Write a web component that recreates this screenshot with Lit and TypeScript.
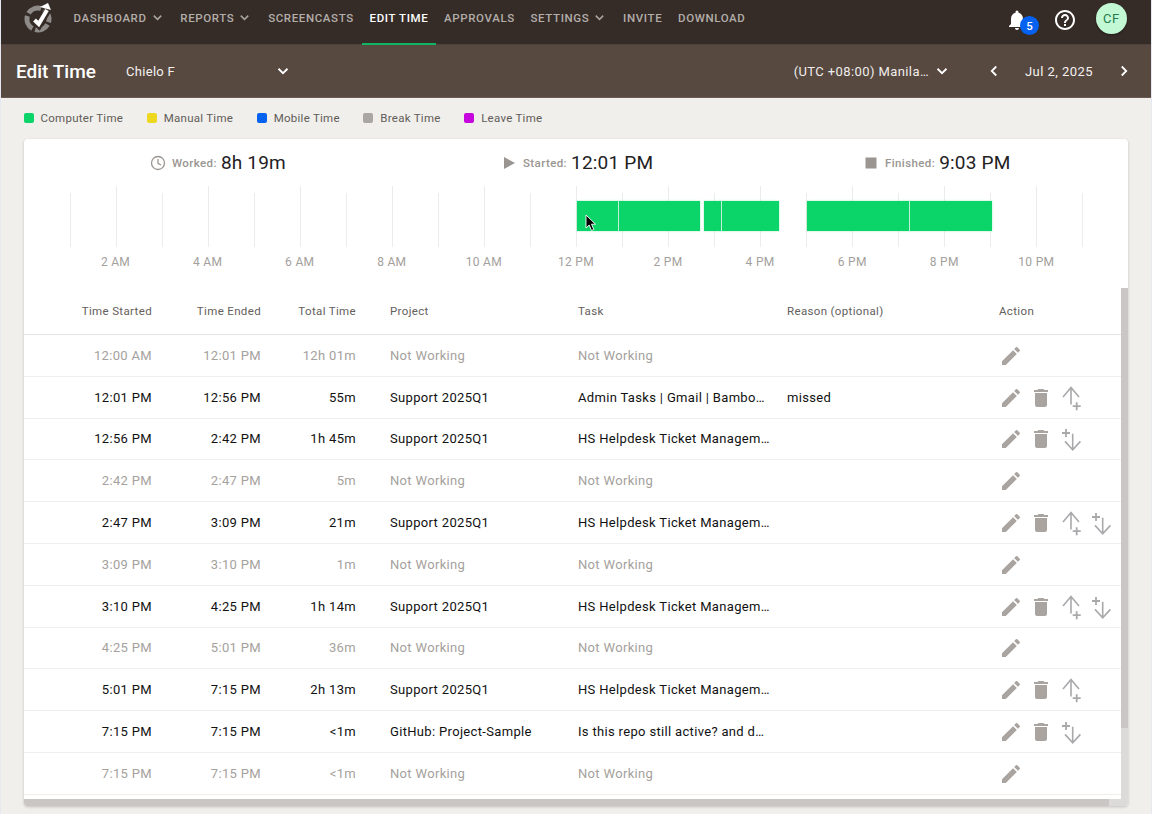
import { LitElement, html, css } from "lit";
import { customElement } from "lit/decorators.js";

const chevron = () => html`<svg class="chev" viewBox="0 0 24 24"><path d="M6 9l6 6 6-6" fill="none" stroke="currentColor" stroke-width="2.4"/></svg>`;
const pencil = html`<svg class="ic" viewBox="0 0 24 24"><path d="M3 17.25V21h3.75L17.81 9.94l-3.75-3.75L3 17.25zM20.71 7.04a1 1 0 0 0 0-1.41l-2.34-2.34a1 1 0 0 0-1.41 0l-1.83 1.83 3.75 3.75 1.83-1.83z"/></svg>`;
const trash = html`<svg class="ic tr" viewBox="0 0 24 24"><path d="M6 19c0 1.1.9 2 2 2h8c1.1 0 2-.9 2-2V7H6v12zM19 4h-3.5l-1-1h-5l-1 1H5v2h14V4z"/></svg>`;
const up = html`<svg class="arrow" viewBox="0 0 23 24"><path d="M11 18.500V1.800M3 11l8-9.500 8 9.500" fill="none" stroke="currentColor" stroke-width="1.600"/><path d="M12.700 20.200h8M16.700 16.200v8" fill="none" stroke="currentColor" stroke-width="1.800"/></svg>`;
const down = html`<svg class="arrow" viewBox="0 0 23 24"><path d="M12.700 6.700v15.500M5 14.400l7.700 8.300 7.700-8.300" fill="none" stroke="currentColor" stroke-width="1.600"/><path d="M2 6h8M6 2v8" fill="none" stroke="currentColor" stroke-width="1.800"/></svg>`;

type Row = [string, string, string, string, string, string, string];
const rows: Row[] = [
  ["12:00 AM", "12:01 PM", "12h 01m", "Not Working", "Not Working", "", ""],
  ["12:01 PM", "12:56 PM", "55m", "Support 2025Q1", "Admin Tasks | Gmail | BambooHR | Slack", "missed", "u"],
  ["12:56 PM", "2:42 PM", "1h 45m", "Support 2025Q1", "HS Helpdesk Ticket Management Queue", "", "d"],
  ["2:42 PM", "2:47 PM", "5m", "Not Working", "Not Working", "", ""],
  ["2:47 PM", "3:09 PM", "21m", "Support 2025Q1", "HS Helpdesk Ticket Management Queue", "", "ud"],
  ["3:09 PM", "3:10 PM", "1m", "Not Working", "Not Working", "", ""],
  ["3:10 PM", "4:25 PM", "1h 14m", "Support 2025Q1", "HS Helpdesk Ticket Management Queue", "", "ud"],
  ["4:25 PM", "5:01 PM", "36m", "Not Working", "Not Working", "", ""],
  ["5:01 PM", "7:15 PM", "2h 13m", "Support 2025Q1", "HS Helpdesk Ticket Management Queue", "", "u"],
  ["7:15 PM", "7:15 PM", "<1m", "GitHub: Project-Sample", "Is this repo still active? and does it need review", "", "d"],
  ["7:15 PM", "7:15 PM", "<1m", "Not Working", "Not Working", "", ""],
];

const hourX = (h: number) => 45.5 + (h - 1) * 46.04;
const bars = [[577, 700], [704, 779], [807, 992]];
const seps = [618, 721, 909];
const legend = [
  ["#0bd468", "Computer Time"],
  ["#eed81f", "Manual Time"],
  ["#0562f0", "Mobile Time"],
  ["#aaa6a2", "Break Time"],
  ["#c506dd", "Leave Time"],
];
const hours = ["2 AM", "4 AM", "6 AM", "8 AM", "10 AM", "12 PM", "2 PM", "4 PM", "6 PM", "8 PM", "10 PM"];

@customElement("app-root")
export class AppRoot extends LitElement {
  static styles = css`
    :host { display: block; height: 814px; overflow: hidden; background: #f0efec; font-family: Roboto, "Liberation Sans", sans-serif; color: #1e1c1b; border-left: 1px solid #e6e8f0; border-right: 1px solid #e6e8f0; box-sizing: border-box; }
    .nav { height: 45px; box-sizing: border-box; background: #352b27; display: flex; align-items: stretch; border-bottom: 1px solid #4d423d; }
    .logo { width: 32px; height: 32px; margin: 2px 0 0 23px; flex: none; }
    .menu { display: flex; margin-left: 9.600px; }
    .mi { display: flex; align-items: center; padding: 0 7.860px 10px; height: 45px; box-sizing: border-box; font-size: 11.5px; font-weight: 500; letter-spacing: .62px; color: #b3aeaa; white-space: nowrap; }
    .mi.active { color: #fff; border-bottom: 2px solid #0fb562; padding-bottom: 8px; }
    .mi .chev { width: 15px; height: 15px; margin-left: 3px; color: #a9a4a0; }
    .right { margin-left: auto; display: flex; align-items: center; padding-bottom: 8px; }
    .bell { position: relative; width: 24px; height: 24px; margin: 4px 24px 0 0; }
    .bell svg { width: 24px; height: 24px; fill: #fff; display: block; }
    .badge { position: absolute; left: 15px; top: 8px; width: 19px; height: 19px; border-radius: 50%; background: #0562f0; color: #fff; font-size: 11.5px; font-weight: 500; display: flex; align-items: center; justify-content: center; }
    .help { width: 24px; height: 24px; margin: 3px 19px 0 0; }
    .avatar { width: 31px; height: 31px; border-radius: 50%; background: #c3f8d5; color: #237a4c; font-size: 13px; letter-spacing: .6px; display: flex; align-items: center; justify-content: center; margin-right: 24px; box-shadow: 0 1px 2px rgba(0,0,0,.4); }
    .sub { height: 52px; background: #574840; display: flex; align-items: center; color: #fff; border-bottom: 1px solid #6c5b52; }
    .title { font-size: 19px; font-weight: 500; margin-left: 15px; width: 110px; }
    .user { font-size: 13px; letter-spacing: .3px; width: 148px; color: #f4f2f0; }
    .sub .chev { width: 18px; height: 18px; color: #fff; }
    .tz { margin-left: auto; font-size: 13px; letter-spacing: .4px; color: #f0eeec; margin-right: 4px; }
    .pager { width: 18px; height: 18px; }
    .date { font-size: 13px; letter-spacing: .45px; width: 112px; text-align: center; color: #f4f2f0; }
    .pagerwrap { display: flex; align-items: center; margin-left: 34px; margin-right: 18px; }
    .legend { display: flex; gap: 23.500px; padding: 0 0 1px 22.500px; height: 40px; align-items: center; font-size: 11.5px; letter-spacing: .27px; color: #615c58; }
    .legend span { display: flex; align-items: center; gap: 7px; }
    .legend i { width: 10px; height: 10px; border-radius: 2px; display: block; }
    .card { position: relative; margin: 0 23px; height: 667px; background: #fff; border-radius: 4px; box-shadow: 0 1px 3px rgba(0,0,0,.2); overflow: hidden; }
    .stats { position: relative; height: 47px; }
    .stat { display: flex; align-items: center; position: absolute; top: 13px; height: 22px; }
    .stat .lbl { font-size: 11.500px; font-weight: 500; letter-spacing: .4px; color: #9a9591; margin-right: 4px; }
    .stat .val { font-size: 19px; letter-spacing: .2px; color: #23211f; margin-bottom: 2px; }
    .stat svg { width: 16px; height: 16px; margin-right: 6px; display: block; }
    .chart { position: relative; height: 102px; }
    .tick { position: absolute; width: 1px; background: #ececea; bottom: 41px; top: 7px; }
    .tick.major { top: 0; }
    .bar { position: absolute; top: 15px; height: 30px; background: #0bd468; box-shadow: 0 0 2px rgba(11,212,104,.4); }
    .sep { position: absolute; top: 15px; height: 30px; width: 1px; background: #c5efd8; }
    .hl { position: absolute; top: 69px; transform: translateX(-50%); font-size: 12px; letter-spacing: .3px; color: #a3a09c; white-space: nowrap; }
    .cursor { position: absolute; left: 561px; top: 28px; width: 12px; height: 18px; }
    .hdr, .row { display: grid; grid-template-columns: 128px 109px 95px 222px 209px 212px 1fr; align-items: center; font-size: 13px; letter-spacing: .33px; box-sizing: border-box; margin-right: 7px; }
    .hdr { height: 47px; font-size: 11.500px; letter-spacing: .35px; color: #64605c; border-bottom: 1px solid #e6e5e2; }
    .row { height: 41.800px; border-bottom: 1px solid #efeeeb; color: #111; }
    .row.off { color: #a5a19d; }
    .r { text-align: right; }
    .p { padding-left: 34px; }
    .t { padding-right: 16px; overflow: hidden; white-space: nowrap; text-overflow: ellipsis; }
    .act { display: flex; gap: 6.500px; align-items: center; padding-top: 1px; }
    .ic { width: 24px; height: 24px; fill: #a9a4a0; display: block; flex: none; }
    .tr { margin: 0 1px 0 -1px; }
    .arrow { width: 23px; height: 24px; color: #a9a9ac; display: block; flex: none; overflow: visible; }
    .vtrack { position: absolute; right: 0; top: 149px; bottom: 0; width: 7px; background: #dddbd9; }
    .vthumb { position: absolute; left: 0; top: 0; width: 7px; height: 440px; background: #c9c6c3; }
    .htrack { position: absolute; left: 0; right: 7px; bottom: 0; height: 7px; background: #dddbd9; }
    .hthumb { position: absolute; left: 0; top: 0; height: 7px; width: 1085px; background: #c9c6c3; }
  `;

  private actions(code: string) {
    if (!code) return html`<div class="act">${pencil}</div>`;
    return html`<div class="act">${pencil}${trash}${code.includes("u") ? up : ""}${code.includes("d") ? down : ""}</div>`;
  }

  render() {
    const menu: [string, boolean, boolean][] = [
      ["Dashboard", true, false], ["Reports", true, false], ["Screencasts", false, false],
      ["Edit Time", false, true], ["Approvals", false, false], ["Settings", true, false],
      ["Invite", false, false], ["Download", false, false],
    ];
    return html`
      <div class="nav">
        <svg class="logo" viewBox="0 0 32 32">
          <circle cx="14" cy="17" r="11" fill="none" stroke="#8e8a87" stroke-width="5" stroke-dasharray="14.280 3" transform="rotate(30 14 17)"/>
          <path d="M10 18l5 5 9-15" fill="none" stroke="#352b27" stroke-width="7"/>
          <path d="M10.500 18l4.200 4 8.300-14" fill="none" stroke="#fff" stroke-width="4"/>
          <path d="M16 5l8-4 3 7z" fill="#fff"/>
        </svg>
        <div class="menu">
          ${menu.map(([t, c, a]) => html`<div class="mi ${a ? "active" : ""}">${t.toUpperCase()}${c ? chevron() : ""}</div>`)}
        </div>
        <div class="right">
          <div class="bell">
            <svg viewBox="0 0 24 24"><path d="M12 22c1.100 0 2-.9 2-2h-4c0 1.100.9 2 2 2zm6-6v-5c0-3.100-1.600-5.600-4.500-6.300V4a1.500 1.500 0 0 0-3 0v.7C7.600 5.400 6 7.900 6 11v5l-2 2v1h16v-1l-2-2z"/></svg>
            <div class="badge">5</div>
          </div>
          <svg class="help" viewBox="0 0 24 24"><path fill="#fff" d="M11 18h2v-2h-2v2zm1-16C6.480 2 2 6.480 2 12s4.480 10 10 10 10-4.480 10-10S17.520 2 12 2zm0 18c-4.410 0-8-3.590-8-8s3.590-8 8-8 8 3.590 8 8-3.590 8-8 8zm0-14c-2.210 0-4 1.790-4 4h2c0-1.100.9-2 2-2s2 .9 2 2c0 2-3 1.750-3 5h2c0-2.250 3-2.500 3-5 0-2.210-1.790-4-4-4z"/></svg>
          <div class="avatar">CF</div>
        </div>
      </div>
      <div class="sub">
        <div class="title">Edit Time</div>
        <div class="user">Chielo F</div>
        ${chevron()}
        <div class="tz">(UTC +08:00) Manila…</div>
        ${chevron()}
        <div class="pagerwrap">
          <svg class="pager" viewBox="0 0 24 24"><path d="M15 6l-6 6 6 6" fill="none" stroke="#fff" stroke-width="2.400"/></svg>
          <div class="date">Jul 2, 2025</div>
          <svg class="pager" viewBox="0 0 24 24"><path d="M9 6l6 6-6 6" fill="none" stroke="#fff" stroke-width="2.400"/></svg>
        </div>
      </div>
      <div class="legend">
        ${legend.map(([c, t]) => html`<span><i style="background:${c}"></i>${t}</span>`)}
      </div>
      <div class="card">
        <div class="stats">
          <div class="stat" style="left:126px">
            <svg viewBox="0 0 16 16"><circle cx="8" cy="8" r="6.500" fill="none" stroke="#9a9591" stroke-width="1.300"/><path d="M8 4v4.300l3 1.700" fill="none" stroke="#9a9591" stroke-width="1.300"/></svg>
            <span class="lbl">Worked:</span><span class="val">8h 19m</span>
          </div>
          <div class="stat" style="left:477px">
            <svg viewBox="0 0 16 16"><path d="M3 2l11 6-11 6z" fill="#9a9591"/></svg>
            <span class="lbl">Started:</span><span class="val">12:01 PM</span>
          </div>
          <div class="stat" style="left:839px">
            <svg viewBox="0 0 16 16"><rect x="2.500" y="2.500" width="11" height="11" fill="#9a9591"/></svg>
            <span class="lbl">Finished:</span><span class="val">9:03 PM</span>
          </div>
        </div>
        <div class="chart">
          ${Array.from({ length: 23 }, (_, i) => i + 1).map((h) => html`<div class="tick ${h % 2 === 0 ? "major" : ""}" style="left:${hourX(h)}px"></div>`)}
          ${bars.map(([a, b]) => html`<div class="bar" style="left:${a - 24}px;width:${b - a}px"></div>`)}
          ${seps.map((x) => html`<div class="sep" style="left:${x - 24}px"></div>`)}
          ${hours.map((t, i) => html`<div class="hl" style="left:${hourX(2 + i * 2)}px">${t}</div>`)}
          <svg class="cursor" viewBox="0 0 12 18">
            <path d="M1 1v13l3.200-3 2.300 5.500 2.300-1-2.300-5.300H10.500z" fill="#000" stroke="#fff" stroke-width=".9"/>
          </svg>
        </div>
        <div class="hdr">
          <div class="r">Time Started</div><div class="r">Time Ended</div><div class="r">Total Time</div>
          <div class="p">Project</div><div>Task</div><div>Reason (optional)</div><div>Action</div>
        </div>
        ${rows.map((r) => {
          const off = r[3] === "Not Working";
          return html`<div class="row ${off ? "off" : ""}">
            <div class="r">${r[0]}</div><div class="r">${r[1]}</div><div class="r">${r[2]}</div>
            <div class="p">${r[3]}</div><div class="t">${r[4]}</div><div>${r[5]}</div>
            ${this.actions(r[6])}
          </div>`;
        })}
        <div class="vtrack"><div class="vthumb"></div></div>
        <div class="htrack"><div class="hthumb"></div></div>
      </div>
    `;
  }
}
